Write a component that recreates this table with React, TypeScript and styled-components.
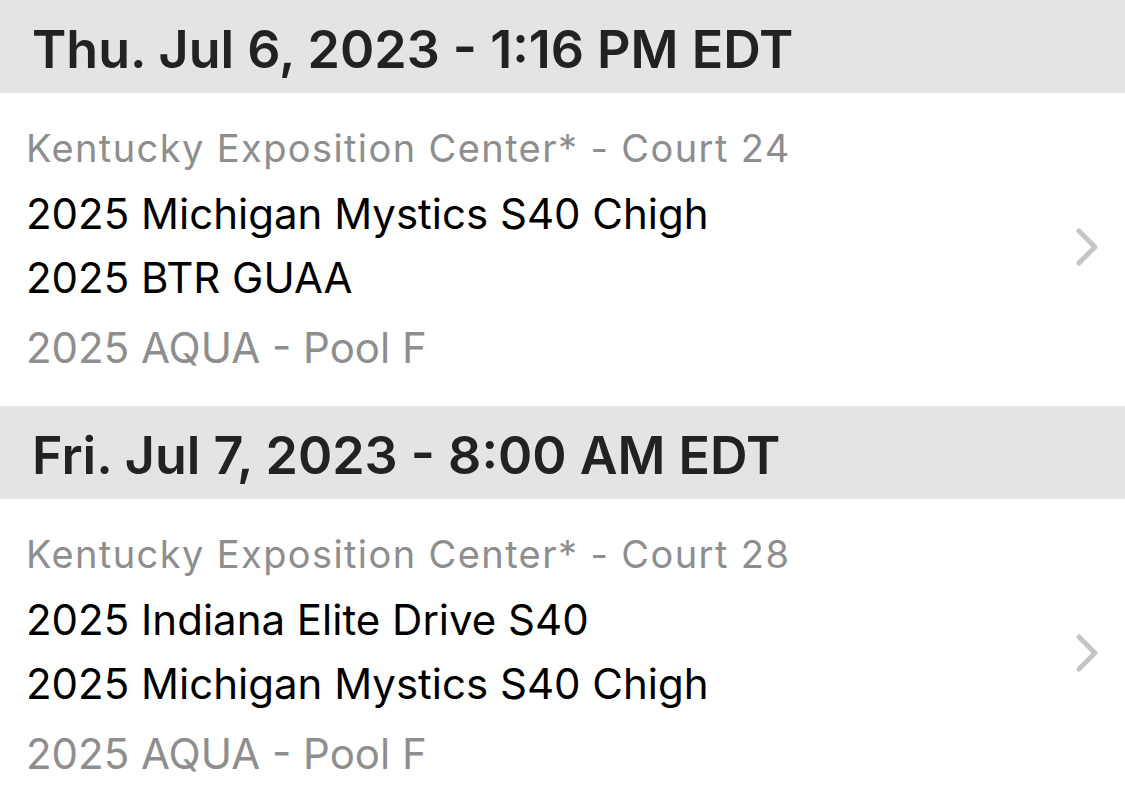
import React from "react";
import styled, {createGlobalStyle} from "styled-components";

const GlobalStyle = createGlobalStyle`
body {
  margin: 0;
  background: #ffffff;
  font-family: Inter, "Liberation Sans", sans-serif;
  -webkit-font-smoothing: antialiased;
}
`

const ScheduleList = styled.div`
width: 1125px;
height: 808px;
overflow: hidden;
background: #ffffff;
`

const DayHeader = styled.div`
height: 93px;
box-sizing: border-box;
display: flex;
align-items: center;
padding: 6px 0 0 32px;
background: #e4e4e4;
color: #222222;
font-size: 52px;
font-weight: 600;
`

const GameRow = styled.div`
display: flex;
align-items: center;
justify-content: space-between;
padding: 21px 24px 26px 26px;
`

const GameInfo = styled.div`
display: flex;
flex-direction: column;
`

const VenueLine = styled.div`
font-size: 38px;
line-height: 68px;
letter-spacing: 1.4px;
color: #8e8e8e;
white-space: nowrap;
`

const InfoLine = styled.div<{ muted?: boolean, space?: number }>`
font-size: 42px;
line-height: 64px;
color: ${({muted}) => muted ? '#8e8e8e' : '#000000'};
margin-top: ${({space}) => space || 0}px;
white-space: nowrap;
`

const Chevron = () => <svg width="26" height="40" viewBox="0 0 26 40">
    <path d="M4 4 L20 20 L4 36" fill="none" stroke="#c5c5c7" strokeWidth="5" strokeLinecap="round"
          strokeLinejoin="round"/>
</svg>

type Game = {
    date: string
    venue: string
    teams: string[]
    pool: string
}

const games: Game[] = [
    {
        date: 'Thu. Jul 6, 2023 - 1:16 PM EDT',
        venue: 'Kentucky Exposition Center* - Court 24',
        teams: ['2025 Michigan Mystics S40 Chigh', '2025 BTR GUAA'],
        pool: '2025 AQUA - Pool F',
    },
    {
        date: 'Fri. Jul 7, 2023 - 8:00 AM EDT',
        venue: 'Kentucky Exposition Center* - Court 28',
        teams: ['2025 Indiana Elite Drive S40', '2025 Michigan Mystics S40 Chigh'],
        pool: '2025 AQUA - Pool F',
    },
]

const App = () => {
    return <ScheduleList>
        <GlobalStyle/>
        {games.map((game, key: number) => <React.Fragment key={key}>
            <DayHeader>{game.date}</DayHeader>
            <GameRow>
                <GameInfo>
                    <VenueLine>{game.venue}</VenueLine>
                    {game.teams.map(team => <InfoLine key={team}>{team}</InfoLine>)}
                    <InfoLine muted space={6}>{game.pool}</InfoLine>
                </GameInfo>
                <Chevron/>
            </GameRow>
        </React.Fragment>)}
    </ScheduleList>
}

export default App
